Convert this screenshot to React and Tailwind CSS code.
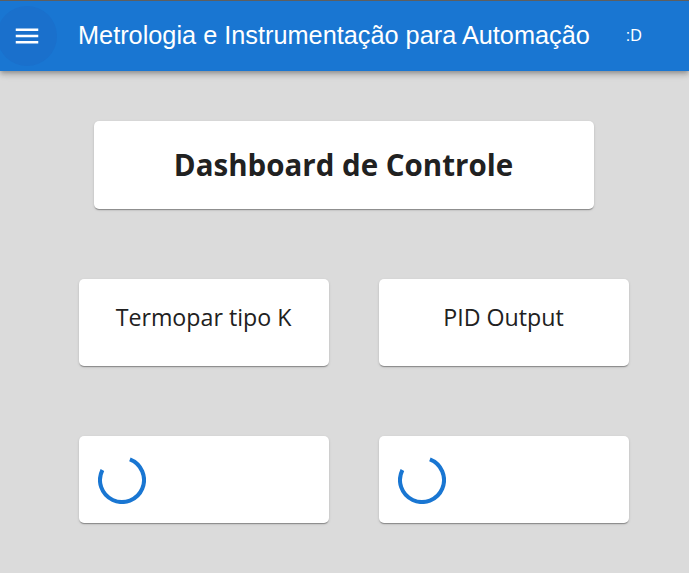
import React from 'react';

const MenuIcon = () => (
  <svg viewBox="0 0 24 24" className="w-[30px] h-[30px]" fill="white">
    <path d="M3 18h18v-2H3v2zm0-5h18v-2H3v2zm0-7v2h18V6H3z" />
  </svg>
);

const Spinner = () => (
  <svg viewBox="0 0 48 48" className="w-[48px] h-[48px]">
    <path
      d="M31.88 3.46 A22 22 0 1 1 4.4 14.01"
      fill="none"
      stroke="#1976d2"
      strokeWidth="4"
    />
  </svg>
);

const Card = ({ children, className = '' }) => (
  <div className={`bg-white rounded-[5px] shadow-[0_2px_1px_-1px_rgba(0,0,0,0.2),0_1px_1px_0_rgba(0,0,0,0.14),0_1px_3px_0_rgba(0,0,0,0.12)] ${className}`}>
    {children}
  </div>
);

export default function App() {
  return (
    <div className="min-h-[573px] bg-[#dbdbdb] font-['Open_Sans',sans-serif] text-[#212121]">
      <header className="h-[71px] bg-[#1976d2] border-t border-[#5e5e5e] flex items-center shadow-[0_2px_4px_-1px_rgba(0,0,0,0.2),0_4px_5px_0_rgba(0,0,0,0.14),0_1px_10px_0_rgba(0,0,0,0.12)] relative z-10">
        <button className="w-[60px] h-[60px] -ml-[3px] rounded-full bg-[#1a70cc] flex items-center justify-center">
          <MenuIcon />
        </button>
        <h1 className="ml-[21px] font-['Liberation_Sans',Arial,sans-serif] text-[25.3px] text-white leading-none">
          Metrologia e Instrumentação para Automação
        </h1>
        <span className="ml-[36px] font-['Liberation_Sans',Arial,sans-serif] text-[16px] text-white">:D</span>
      </header>

      <main className="flex flex-col items-center pt-[50px] pr-[2px]">
        <Card className="w-[500px] h-[88px] flex items-center justify-center">
          <h2 className="text-[29.5px] font-bold">Dashboard de Controle</h2>
        </Card>

        <div className="grid grid-cols-2 gap-x-[50px] gap-y-[70px] mt-[70px] ml-[20px]">
          <Card className="w-[250px] h-[87px] flex items-center justify-center">
            <span className="text-[23.2px] -mt-[11px]">Termopar tipo K</span>
          </Card>
          <Card className="w-[250px] h-[87px] flex items-center justify-center">
            <span className="text-[23.2px] -mt-[11px]">PID Output</span>
          </Card>
          <Card className="w-[250px] h-[87px] flex items-center pl-[19px]">
            <Spinner />
          </Card>
          <Card className="w-[250px] h-[87px] flex items-center pl-[19px]">
            <Spinner />
          </Card>
        </div>
      </main>
    </div>
  );
}
